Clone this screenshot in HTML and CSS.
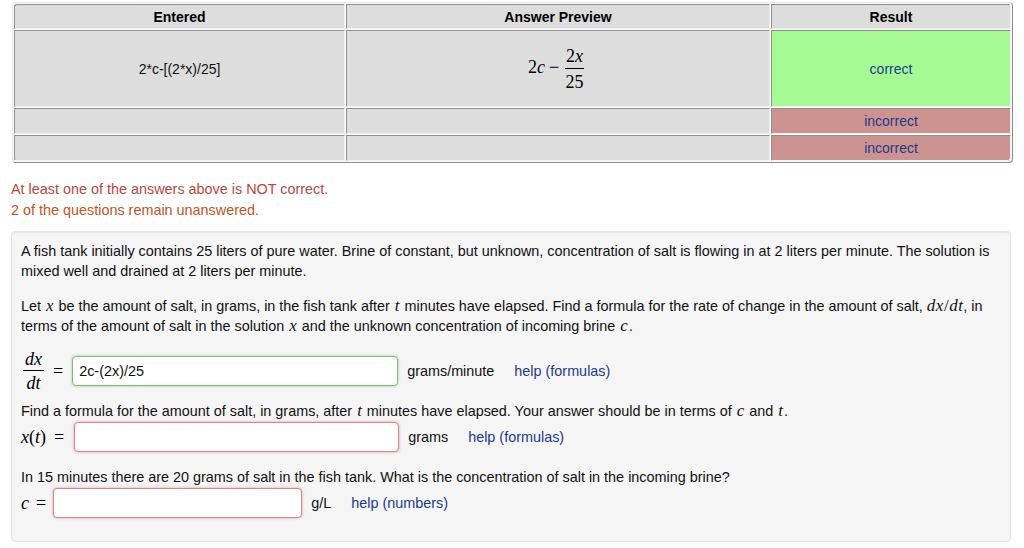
FILE: index.html
```html
<!DOCTYPE html>
<html>
<head>
<meta charset="utf-8">
<link rel="stylesheet" href="styles.css">
</head>
<body>
<div class="page">
  <table class="results">
    <colgroup><col class="c1"><col class="c2"><col class="c3"></colgroup>
    <tr class="head">
      <th>Entered</th><th>Answer Preview</th><th>Result</th>
    </tr>
    <tr class="r1">
      <td>2*c-[(2*x)/25]</td>
      <td><span class="math pv">2<i>c</i><span class="op">−</span><span class="frac"><span class="num">2<i>x</i></span><span class="den">25</span></span></span></td>
      <td class="ok">correct</td>
    </tr>
    <tr class="r2">
      <td></td><td></td><td class="bad">incorrect</td>
    </tr>
    <tr class="r3">
      <td></td><td></td><td class="bad">incorrect</td>
    </tr>
  </table>

  <div class="msgs">
    <div class="msg-err">At least one of the answers above is NOT correct.</div>
    <div class="msg-warn">2 of the questions remain unanswered.</div>
  </div>

  <div class="well">
    <p class="p1">A fish tank initially contains 25 liters of pure water. Brine of constant, but unknown, concentration of salt is flowing in at 2 liters per minute. The solution is mixed well and drained at 2 liters per minute.</p>
    <p class="p2">Let <i class="mv">x</i> be the amount of salt, in grams, in the fish tank after <i class="mv">t</i> minutes have elapsed. Find a formula for the rate of change in the amount of salt, <span class="mi"><i>dx</i>/<i>dt</i></span>, in terms of the amount of salt in the solution <i class="mv">x</i> and the unknown concentration of incoming brine <i class="mv">c</i>.</p>

    <div class="ans row1">
      <span class="lbl math"><span class="frac small"><span class="num"><i>dx</i></span><span class="den"><i>dt</i></span></span><span class="eq">=</span></span>
      <input class="field good w1" type="text" value="2c-(2x)/25">
      <span class="unit">grams/minute</span>
      <a class="help">help (formulas)</a>
    </div>

    <p class="p3">Find a formula for the amount of salt, in grams, after <i class="mv">t</i> minutes have elapsed. Your answer should be in terms of <i class="mv">c</i> and <i class="mv">t</i>.</p>

    <div class="ans row2">
      <span class="lbl math"><i>x</i>(<i>t</i>)<span class="eq">=</span></span>
      <input class="field wrong w2" type="text" value="">
      <span class="unit">grams</span>
      <a class="help">help (formulas)</a>
    </div>

    <p class="p4">In 15 minutes there are 20 grams of salt in the fish tank. What is the concentration of salt in the incoming brine?</p>

    <div class="ans row3">
      <span class="lbl math"><i>c</i><span class="eq">=</span></span>
      <input class="field wrong w3" type="text" value="">
      <span class="unit">g/L</span>
      <a class="help">help (numbers)</a>
    </div>
  </div>
</div>
</body>
</html>
```

FILE: styles.css
```css
html, body {
  margin: 0;
  padding: 0;
  background: #fff;
}
body {
  font-family: "Liberation Sans", Arial, Helvetica, sans-serif;
  font-size: 14px;
  color: #111;
}
.page {
  padding: 2px 0 0 11px;
  width: 1000px;
}

/* results table */
.results {
  margin-left: 1px;
  width: 1000px;
  border-collapse: separate;
  border-spacing: 1px;
  border: 1px solid;
  border-color: #e6e6e6 #8a8a8a #8a8a8a #e6e6e6;
  border-radius: 4px;
  table-layout: fixed;
}
.c1 { width: 331px; }
.c2 { width: 424px; }
.c3 { width: 240px; }
.results th, .results td {
  background: #dddddd;
  border: 1px solid;
  border-color: #8e8e8e #f0f0f0 #f0f0f0 #8e8e8e;
  padding: 0 4px;
  text-align: center;
  vertical-align: middle;
  box-sizing: border-box;
}
.results th {
  font-weight: bold;
  height: 25px;
  color: #000;
}
.r1 td { height: 77px; }
.r2 td { height: 26px; }
.r3 td { height: 26px; }
.results td.ok {
  background: #a6fa94;
  color: #1c3a8c;
}
.results td.bad {
  background: #cc9391;
  color: #1c3a8c;
}
.results tr.r3 td:first-child { border-bottom-left-radius: 3px; }
.results tr.r3 td:last-child { border-bottom-right-radius: 3px; }
.results tr.head th:first-child { border-top-left-radius: 3px; }
.results tr.head th:last-child { border-top-right-radius: 3px; }

/* math */
.math {
  font-family: "Liberation Serif", "Times New Roman", serif;
  font-size: 18px;
  color: #000;
  white-space: nowrap;
}
.math i, .mi i {
  font-family: "Liberation Serif", "Times New Roman", serif;
  font-style: italic;
}
i.mv {
  font-family: "Liberation Serif", "Times New Roman", serif;
  font-style: italic;
  font-size: 17px;
  line-height: 1;
  padding: 0 1px;
}
.mi {
  font-family: "Liberation Serif", "Times New Roman", serif;
  font-size: 17px;
  line-height: 1;
  white-space: nowrap;
  letter-spacing: 0.5px;
}
.op { margin: 0 6px 0 4px; }
.frac {
  display: inline-flex;
  flex-direction: column;
  align-items: center;
  vertical-align: middle;
}
.frac .num {
  padding: 0 1px 3px;
  border-bottom: 1px solid #000;
  line-height: 18px;
}
.frac .den {
  padding-top: 4px;
  line-height: 18px;
}
.pv { position: relative; left: -2px; }

/* messages */
.msgs {
  margin-top: 16px;
  line-height: 21px;
  font-size: 14.4px;
}
.msg-err { color: #b8473f; }
.msg-warn { color: #c2551c; }

/* well */
.well {
  margin-top: 10px;
  background: #f5f5f5;
  border: 1px solid #e3e3e3;
  border-radius: 4px;
  box-shadow: inset 0 1px 1px rgba(0,0,0,0.05);
  padding: 9px 9px 23px 9px;
  line-height: 20px;
  font-size: 14.4px;
}
.well p { margin: 0; }
.p2 { margin-top: 15px !important; }
.p3 { margin-top: 10px !important; }
.p4 { margin-top: 15px !important; }

.ans {
  display: flex;
  align-items: center;
}
.row1 { margin-top: 14px; height: 41px; }
.row2 { height: 31px; }
.row3 { height: 31px; }

.lbl {
  display: inline-flex;
  align-items: center;
  font-size: 18px;
}
.row1 .lbl { padding-left: 2px; }
.frac.small .num { padding: 0 2px 2px; line-height: 18px; }
.frac.small .den { padding-top: 3px; line-height: 18px; }
.eq {
  font-style: normal;
  margin-left: 8px;
}
.row1 .eq { margin-left: 9px; }
.row3 .eq { margin-left: 7px; }

.field {
  box-sizing: border-box;
  height: 30px;
  margin-left: 10px;
  padding: 0 6px;
  font-family: "Liberation Sans", Arial, sans-serif;
  font-size: 14.4px;
  color: #111;
  background: #fff;
  border: 1px solid;
  border-radius: 4px;
  outline: none;
}
.row1 .field { margin-left: 9px; }
.row3 .field { margin-left: 7px; }
.field.good {
  border-color: #7cbf72;
  box-shadow: 0 0 3px rgba(100, 180, 90, 0.6);
}
.field.wrong {
  border-color: #d98585;
  box-shadow: 0 0 3px rgba(210, 90, 90, 0.55);
}
.w1 { width: 326px; }
.w2 { width: 325px; }
.w3 { width: 249px; }

.unit {
  margin-left: 9px;
  color: #111;
}
.help {
  margin-left: 20px;
  color: #1c3a8c;
  text-decoration: none;
}
```
